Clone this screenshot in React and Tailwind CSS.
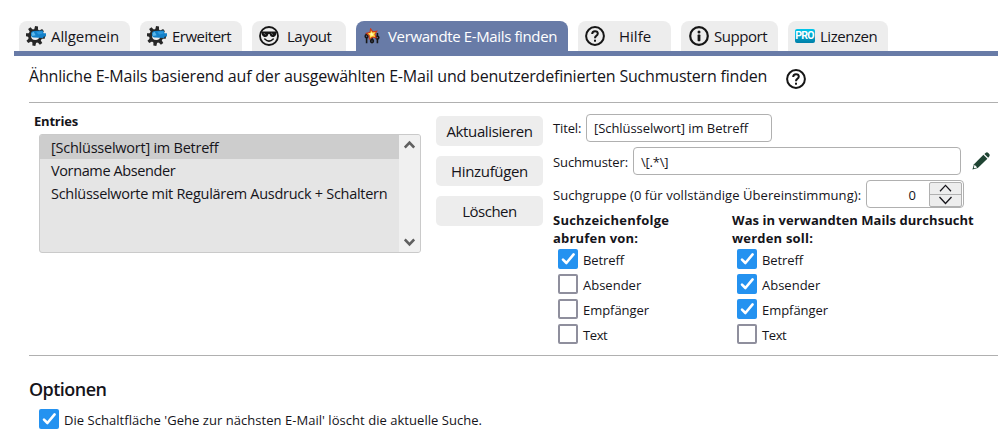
function GearIcon() {
  return (
    <svg viewBox="0 0 20 20" className="size-5 shrink-0">
      <g fill="#262626" transform="translate(9.2 10)">
        {[0, 45, 90, 135, 180, 225, 270, 315].map((a) => (
          <path key={a} d="M-1.9 -6 L-1.5 -9.8 H1.5 L1.9 -6 Z" transform={`rotate(${a + 8})`} />
        ))}
      </g>
      <circle cx="9.2" cy="10" r="5.6" fill="#ededed" stroke="#262626" strokeWidth="3" />
      <path d="M5 7 Q5.4 5 7.4 5 L16.8 4.6 L17.6 7.2 H20 V10.6 H17.8 L17 12 L7.6 11.6 Q4.8 11.2 5 8.6 Z" fill="#1480c8" />
      <path d="M5.6 7.4 Q6.2 5.8 7.8 5.9 L9.6 9.2 L6.2 10 Z" fill="#5db8ea" />
      <path d="M10 5.8 L16 5.3 L16.6 7.4 L12.5 8.4 Z" fill="#2b97dc" />
    </svg>
  );
}

function SunglassesIcon() {
  return (
    <svg viewBox="0 0 20 20" className="size-5 shrink-0" fill="none" stroke="#161616">
      <circle cx="10" cy="10" r="9" strokeWidth="1.8" />
      <path d="M2 5.4 H18 L17.2 8.2 Q16.4 11 13.6 11 Q11.2 11 10.6 8 H9.4 Q8.8 11 6.4 11 Q3.6 11 2.8 8.2 Z" fill="#161616" stroke="none" />
      <path d="M4.8 7 L6.6 8.8 M12.2 7 L14 8.8" stroke="#8a8a8a" strokeWidth="0.8" />
      <path d="M5.8 13 Q10 17.2 14.2 13" strokeWidth="1.6" strokeLinecap="round" />
    </svg>
  );
}

function StarSlidersIcon() {
  return (
    <svg viewBox="0 0 16 16" className="size-4 shrink-0">
      <g stroke="#171717" strokeWidth="1.6" fill="#687ba7">
        <path d="M2.6 5 V15.2 M8 9 V15.2 M13.4 5 V15.2" />
        <circle cx="2.6" cy="8.2" r="1.4" />
        <circle cx="8" cy="13" r="1.4" />
        <circle cx="13.4" cy="9.6" r="1.4" />
      </g>
      <path d="M6.6 0.8 L8.8 3.8 L12.8 3.2 L10.9 6.3 L12.2 9.8 L8.8 9 L5.4 11 L5.2 7.6 L2.4 5.2 L6 4.2 Z" fill="#ffd93a" stroke="#c83a1c" strokeWidth="1.1" />
      <path d="M7.2 4 L8.2 5.4 L10 5.4 L9 6.6 L9.4 7.8 L7.8 7.4 L6.5 8.2 L6.6 6.6 L5.4 5.8 L6.8 5.4 Z" fill="#fff9b0" />
    </svg>
  );
}

function HelpIcon() {
  return (
    <svg viewBox="0 0 20 20" className="size-5 shrink-0" fill="none" stroke="#161616">
      <circle cx="10" cy="10" r="8.9" strokeWidth="2" />
      <path d="M7.2 8 Q7.2 5.2 10 5.2 Q12.8 5.2 12.8 7.6 Q12.8 9 11.3 9.9 Q10 10.7 10 12.3" strokeWidth="2" />
      <rect x="9" y="13.7" width="2" height="2" fill="#161616" stroke="none" />
    </svg>
  );
}

function InfoIcon() {
  return (
    <svg viewBox="0 0 20 20" className="size-5 shrink-0" fill="none" stroke="#161616">
      <circle cx="10" cy="10" r="8.8" strokeWidth="2.2" />
      <circle cx="10" cy="6" r="1.5" fill="#161616" stroke="none" />
      <rect x="8.6" y="8.6" width="2.8" height="6.6" rx="0.6" fill="#161616" stroke="none" />
    </svg>
  );
}

function ProIcon() {
  return (
    <span className="flex h-[14px] w-5 shrink-0 items-center justify-center rounded-[2px] bg-gradient-to-b from-[#00c8ec] to-[#007fa8] font-['Roboto'] text-[10.5px] leading-none font-bold tracking-[-0.8px] text-white">
      <span className="-ml-px">PRO</span>
    </span>
  );
}

function PencilIcon() {
  return (
    <svg viewBox="0 0 18 18" className="size-[18px] shrink-0">
      <path d="M0.4 17.6 L2 12.2 L11.4 2.8 L15.4 6.8 L5.8 16 Z" fill="#1f4433" />
      <path d="M12.4 2 L13.8 0.8 Q15 -0.2 16.3 1 L17.2 2 Q18.2 3.2 17.2 4.4 L16.2 5.8 Z" fill="#1f4433" />
      <path d="M2.6 12.8 L5.2 15.4 L2.4 16.2 L1.8 15.6 Z" fill="#fff" />
    </svg>
  );
}

function Checkbox({ checked }) {
  return checked ? (
    <span className="flex size-5 shrink-0 items-center justify-center rounded-[2px] bg-[#2492f0]">
      <svg viewBox="0 0 20 20" className="size-5" fill="none" stroke="#fff" strokeWidth="2.6" strokeLinecap="round" strokeLinejoin="round">
        <path d="M5 10.6 L8.4 14 L15.6 5.4" />
      </svg>
    </span>
  ) : (
    <span className="size-5 shrink-0 rounded-[2px] border-2 border-[#8f8f9d] bg-white" />
  );
}

const tabs = [
  { label: 'Allgemein', icon: <GearIcon />, box: 'w-[111px] pl-[7px] gap-[5px]', text: 'tracking-[-0.1px]' },
  { label: 'Erweitert', icon: <GearIcon />, box: 'w-[102px] pl-[7px] gap-[5px]', text: 'tracking-[-0.5px]' },
  { label: 'Layout', icon: <SunglassesIcon />, box: 'w-[94px] pl-[7px] gap-[8px]', text: 'tracking-[-0.5px]' },
  { label: 'Verwandte E-Mails finden', icon: <StarSlidersIcon />, box: 'w-[212px] pl-[8px] gap-[8px]', text: 'tracking-[-0.37px]', active: true },
  { label: 'Hilfe', icon: <HelpIcon />, box: 'w-[93px] pl-[7px] gap-[14px]', text: '' },
  { label: 'Support', icon: <InfoIcon />, box: 'w-[97px] pl-[8px] gap-[5px]', text: 'tracking-[-0.45px]' },
  { label: 'Lizenzen', icon: <ProIcon />, box: 'w-[100px] pl-[7px] gap-[5px]', text: 'tracking-[-0.47px]' },
];

function CheckList({ items }) {
  return (
    <div className="mt-0.5 flex flex-col gap-[5px] pl-[5px]">
      {items.map(([label, checked, tracking]) => (
        <label key={label} className="flex h-5 items-center gap-[5px]">
          <Checkbox checked={checked} />
          <span className={`pt-[3px] whitespace-nowrap ${tracking}`}>{label}</span>
        </label>
      ))}
    </div>
  );
}

export default function App() {
  return (
    <div className="h-[444px] w-[998px] overflow-hidden bg-white pt-[21px] font-['Open_Sans','Noto_Sans',sans-serif] text-[13px] text-[#15141a]">
      <nav className="ml-[14px] flex gap-[10px] border-b-[5px] border-[#687ba7] pl-[5px]">
        {tabs.map((t) => (
          <div
            key={t.label}
            className={`flex h-[30px] items-center rounded-t-lg text-[15px] whitespace-nowrap ${t.box} ${t.active ? 'bg-[#687ba7] text-white' : 'bg-[#ededed]'}`}
          >
            {t.icon}
            <span className={t.text}>{t.label}</span>
          </div>
        ))}
      </nav>

      <main className="ml-[29px]">
        <div className="flex h-[46px] items-center border-b border-transparent">
          <h1 className="-mt-[5px] w-[757px] text-[16px] tracking-[-0.2px] whitespace-nowrap">
            Ähnliche E-Mails basierend auf der ausgewählten E-Mail und benutzerdefinierten Suchmustern finden
          </h1>
          <HelpIcon />
        </div>
        <hr className="border-t border-[#b0b0b0]" />

        <div className="flex h-[252px]">
          <section className="w-[407px] pt-[9px] pl-[5px]">
            <h2 className="h-[22px] leading-[19px] font-bold tracking-[-0.2px]">Entries</h2>
            <div className="ml-[5px] flex h-[119px] w-[382px] overflow-hidden rounded-[3px] border border-[#cacaca] bg-[#e5e5e5]">
              <ul className="flex-1 text-[14.5px] leading-[23px] whitespace-nowrap">
                <li className="bg-[#cdcdcd] pt-px pl-[11px] tracking-[-0.24px]">[Schlüsselwort] im Betreff</li>
                <li className="pl-[11px] tracking-[-0.38px]">Vorname Absender</li>
                <li className="pl-[11px] tracking-[-0.29px]">Schlüsselworte mit Regulärem Ausdruck + Schaltern</li>
              </ul>
              <div className="flex w-[21px] flex-col items-center justify-between bg-[#f0f0f0] py-[5px]">
                <svg viewBox="0 0 11 9" className="h-[9px] w-[11px]" fill="none" stroke="#606060" strokeWidth="2.6">
                  <path d="M0.8 7.6 L5.5 2.6 L10.2 7.6" />
                </svg>
                <svg viewBox="0 0 11 9" className="h-[9px] w-[11px]" fill="none" stroke="#606060" strokeWidth="2.6">
                  <path d="M0.8 1.4 L5.5 6.4 L10.2 1.4" />
                </svg>
              </div>
            </div>
          </section>

          <section className="flex w-[107px] flex-col gap-[10px] pt-[13px] text-[15px]">
            <button className="h-[30px] rounded-[5px] bg-[#ededed] tracking-[-0.38px]">Aktualisieren</button>
            <button className="h-[30px] rounded-[5px] bg-[#ededed] tracking-[-0.33px]">Hinzufügen</button>
            <button className="h-[30px] rounded-[5px] bg-[#ededed] tracking-[-0.5px]">Löschen</button>
          </section>

          <section className="ml-[10px] flex-1 pt-[11px]">
            <div className="flex h-7 items-center">
              <span className="w-[33px] pt-px tracking-[-0.15px]">Titel:</span>
              <div className="flex h-7 w-[186px] items-center rounded-[4px] border border-[#b0b0b0] pt-px pl-[7px] tracking-[-0.06px]">[Schlüsselwort] im Betreff</div>
            </div>
            <div className="mt-[5px] flex h-7 items-center">
              <span className="w-[80px] pt-[3px] tracking-[-0.11px]">Suchmuster:</span>
              <div className="flex h-7 w-[328px] items-center rounded-[4px] border border-[#b0b0b0] pt-[3px] pl-[7px] tracking-[-0.2px]">{'\\[.*\\]'}</div>
              <div className="ml-[11px]"><PencilIcon /></div>
            </div>
            <div className="mt-[5px] flex h-7 items-center">
              <span className="w-[313px] pt-[3px] tracking-[0.07px] whitespace-nowrap">Suchgruppe (0 für vollständige Übereinstimmung):</span>
              <div className="flex h-7 w-[98px] items-center justify-end rounded-[4px] border border-[#b0b0b0] pr-px">
                <span className="mr-[13px] pt-[3px]">0</span>
                <div className="flex h-[25px] w-[33px] flex-col divide-y divide-[#b0b0b0] rounded-[2px] border border-[#b0b0b0] bg-[#ededed]">
                  <svg viewBox="0 0 31 12" className="h-[12px] w-[31px]" fill="none" stroke="#15141a" strokeWidth="1.3">
                    <path d="M9.5 9 L15.5 2.5 L21.5 9" />
                  </svg>
                  <svg viewBox="0 0 31 11" className="h-[11px] w-[31px]" fill="none" stroke="#15141a" strokeWidth="1.3">
                    <path d="M9.5 2 L15.5 8.5 L21.5 2" />
                  </svg>
                </div>
              </div>
            </div>
            <div className="mt-[3px] flex">
              <div className="w-[179px]">
                <h3 className="leading-[18px] font-bold whitespace-nowrap">
                  <span className="tracking-[0.23px]">Suchzeichenfolge</span>
                  <br />
                  <span className="tracking-[0.2px]">abrufen von:</span>
                </h3>
                <CheckList
                  items={[
                    ['Betreff', true, 'tracking-[-0.1px]'],
                    ['Absender', false, ''],
                    ['Empfänger', false, 'tracking-[-0.05px]'],
                    ['Text', false, 'tracking-[-0.4px]'],
                  ]}
                />
              </div>
              <div>
                <h3 className="leading-[18px] font-bold whitespace-nowrap">
                  <span className="tracking-[0.06px]">Was in verwandten Mails durchsucht</span>
                  <br />
                  <span className="tracking-[0.2px]">werden soll:</span>
                </h3>
                <CheckList
                  items={[
                    ['Betreff', true, 'tracking-[-0.1px]'],
                    ['Absender', true, ''],
                    ['Empfänger', true, 'tracking-[-0.05px]'],
                    ['Text', false, 'tracking-[-0.4px]'],
                  ]}
                />
              </div>
            </div>
          </section>
        </div>
        <hr className="border-t border-[#b0b0b0]" />

        <h2 className="mt-[19px] h-[34px] text-[18px] leading-[28px] font-semibold tracking-[-0.55px]">Optionen</h2>
        <label className="flex h-5 items-center gap-[5px] pl-[10px]">
          <Checkbox checked />
          <span className="pt-[3px] tracking-[0.04px]">Die Schaltfläche 'Gehe zur nächsten E-Mail' löscht die aktuelle Suche.</span>
        </label>
      </main>
    </div>
  );
}
